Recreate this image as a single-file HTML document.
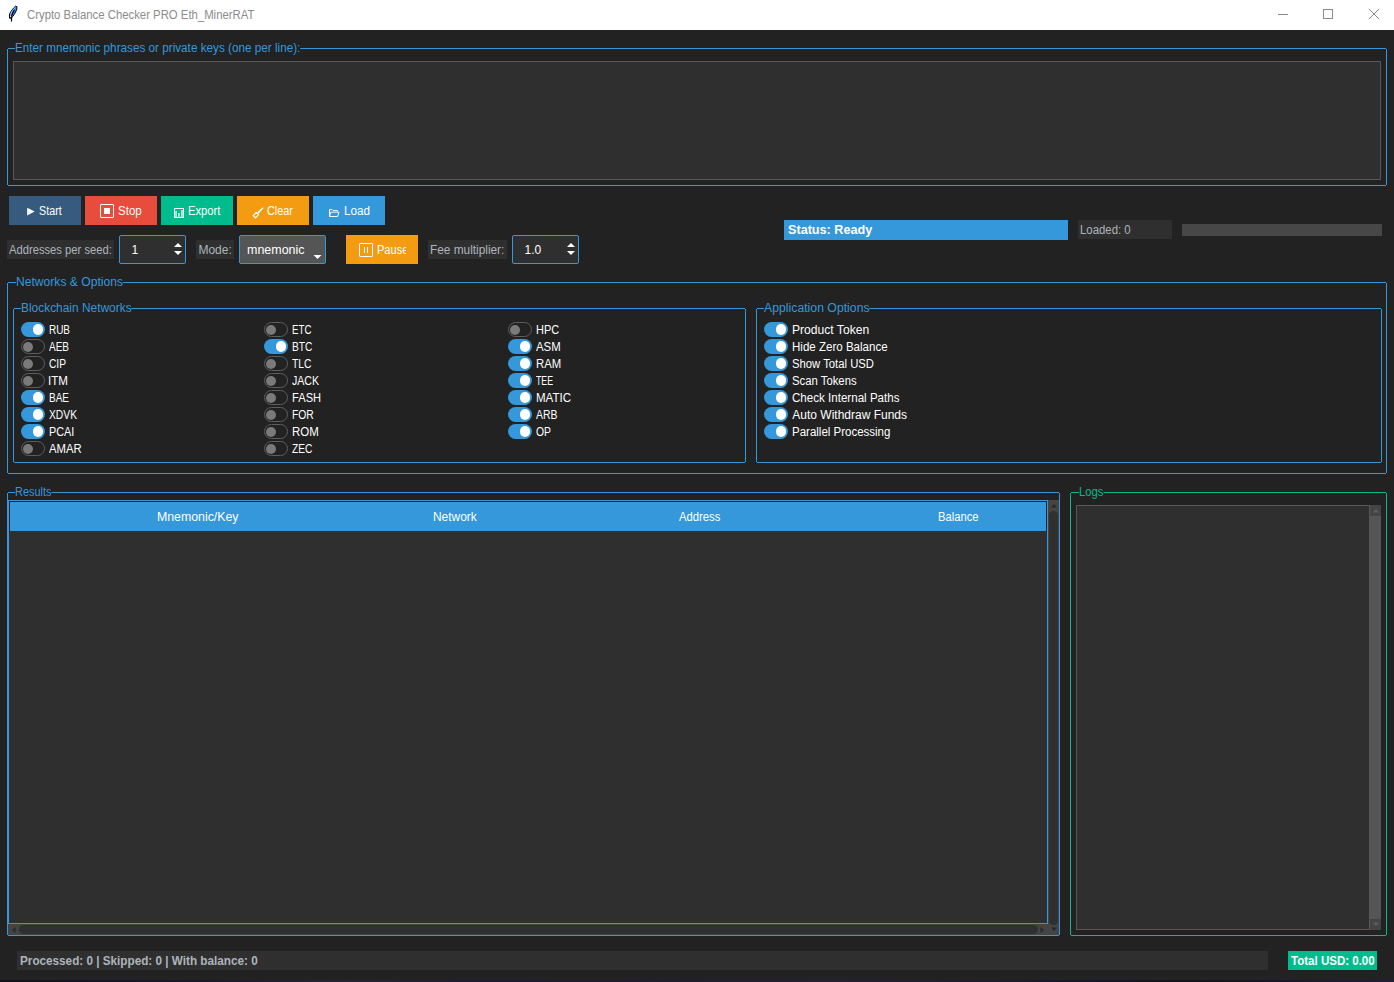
<!DOCTYPE html>
<html><head><meta charset="utf-8"><style>
html,body{margin:0;padding:0;width:1394px;height:982px;overflow:hidden;background:#222;}
.t{position:absolute;white-space:nowrap;transform-origin:0 0;}
</style></head><body>
<div style="position:absolute;left:0px;top:0px;width:1394px;height:30px;background:#fff"></div>
<div style="position:absolute;left:0px;top:30px;width:1394px;height:950px;background:#222"></div>
<div style="position:absolute;left:0px;top:980px;width:1394px;height:2px;background:linear-gradient(90deg,#14121f 0%,#1c1830 15%,#2a2238 25%,#1e1a34 35%,#231c30 50%,#2a1e34 60%,#1a1830 75%,#15131f 85%,#221c3a 100%)"></div>
<svg style="position:absolute;left:0px;top:0px" width="24" height="24" viewBox="0 0 24 24">
<path d="M9.6 18.2 L9.4 15 L10.4 12.4 L12 10 L13.6 8 L15.6 6.2 L16.9 6.6 L16.8 9.2 L15.6 12 L14.1 14.6 L12.6 16.6 L11.2 18.2 Z" fill="#3d8af0" stroke="#000" stroke-width="1"/>
<path d="M10.6 15 L11.6 12 L13.4 9.4 L15.2 7.4" stroke="#8cc0ff" stroke-width="1" fill="none"/>
<path d="M11.5 21.5 L11.5 16.2 L12.6 13.2 L14.4 10" stroke="#000" stroke-width="1.2" fill="none"/>
<rect x="10" y="15.6" width="1.2" height="1.2" fill="#fff"/>
</svg>
<div style="position:absolute;left:1278px;top:14px;width:10px;height:1px;background:#8a8a8a"></div>
<div style="position:absolute;left:1323px;top:9px;width:8px;height:8px;border:1px solid #8a8a8a"></div>
<svg style="position:absolute;left:1368px;top:8px" width="12" height="12" viewBox="0 0 12 12"><path d="M1 1 L11 11 M11 1 L1 11" stroke="#8a8a8a" stroke-width="1"/></svg>
<div style="position:absolute;left:8px;top:48px;width:1378px;height:1px;background:#3498db"></div><div style="position:absolute;left:8px;top:185px;width:1378px;height:1px;background:#3498db"></div><div style="position:absolute;left:7px;top:49px;width:1px;height:136px;background:#3498db"></div><div style="position:absolute;left:1386px;top:49px;width:1px;height:136px;background:#3498db"></div>
<div style="position:absolute;left:13px;top:61px;width:1366px;height:117px;background:#2f2f2f;border:1px solid #575757"></div>
<div style="position:absolute;left:9px;top:196px;width:72px;height:29px;background:#375a7f"></div>
<div style="position:absolute;left:85px;top:196px;width:72px;height:29px;background:#e74c3c"></div>
<div style="position:absolute;left:161px;top:196px;width:72px;height:29px;background:#00bc8c"></div>
<div style="position:absolute;left:237px;top:196px;width:72px;height:29px;background:#f39c12"></div>
<div style="position:absolute;left:313px;top:196px;width:72px;height:29px;background:#3498db"></div>
<svg style="position:absolute;left:26px;top:207px" width="10" height="10" viewBox="0 0 10 10"><path d="M1.2 0.8 L8.6 4.6 L1.2 8.6 Z" fill="#fff"/></svg>
<div style="position:absolute;left:100px;top:204px;width:12px;height:12px;border:1px solid #fff;border-radius:1px"></div>
<div style="position:absolute;left:104px;top:208px;width:6px;height:6px;background:#fff"></div>
<svg style="position:absolute;left:174px;top:208px" width="10" height="10" viewBox="0 0 10 10">
<rect x="0.5" y="0.5" width="9" height="9" fill="none" stroke="#fff" stroke-width="1"/>
<rect x="1.3" y="3" width="1.5" height="7" fill="#fff" opacity="0.85"/><rect x="4.2" y="5" width="1.5" height="5" fill="#fff" opacity="0.85"/><rect x="7.2" y="2" width="1.5" height="8" fill="#fff" opacity="0.85"/></svg>
<svg style="position:absolute;left:252px;top:207px" width="12" height="12" viewBox="0 0 12 12">
<path d="M6.3 5.6 L10.6 1.3" stroke="#fff" stroke-width="1.6" stroke-linecap="round"/>
<path d="M1.2 8.6 L4.3 5.4 L6.6 7.7 L3.5 10.8 Z" fill="none" stroke="#fff" stroke-width="1.2" stroke-linejoin="round"/></svg>
<svg style="position:absolute;left:328px;top:208px" width="12" height="10" viewBox="0 0 12 10">
<path d="M1.5 8.5 V1.5 H4 L5 2.5 H9.5 V3.5" fill="none" stroke="#fff" stroke-width="0.95"/>
<path d="M1.5 8.5 L2.8 4.2 H11 L9.6 8.5 Z" fill="none" stroke="#fff" stroke-width="0.95" stroke-linejoin="round"/></svg>
<div style="position:absolute;left:7px;top:240px;width:107px;height:19px;background:#2f2f2f"></div>
<div style="position:absolute;left:119px;top:235px;width:65px;height:27px;background:#2f2f2f;border:1px solid #3498db;border-radius:2px"></div>
<div style="position:absolute;left:196px;top:240px;width:38px;height:19px;background:#2f2f2f"></div>
<div style="position:absolute;left:239px;top:235px;width:85px;height:27px;background:#555;border:1px solid #3498db;border-radius:2px"></div>
<div style="position:absolute;left:346px;top:235px;width:72px;height:29px;background:#f39c12"></div>
<div style="position:absolute;left:428px;top:240px;width:79px;height:19px;background:#2f2f2f"></div>
<div style="position:absolute;left:512px;top:235px;width:65px;height:27px;background:#2f2f2f;border:1px solid #3498db;border-radius:2px"></div>
<svg style="position:absolute;left:172.5px;top:242px" width="10" height="14" viewBox="0 0 10 14">
<path d="M1 5 L5 1 L9 5 Z" fill="#fff"/><path d="M1 9 L5 13 L9 9 Z" fill="#fff"/></svg>
<svg style="position:absolute;left:565.5px;top:242px" width="10" height="14" viewBox="0 0 10 14">
<path d="M1 5 L5 1 L9 5 Z" fill="#fff"/><path d="M1 9 L5 13 L9 9 Z" fill="#fff"/></svg>
<svg style="position:absolute;left:313px;top:254px" width="9" height="6" viewBox="0 0 9 6"><path d="M0.5 1 L8.5 1 L4.5 5 Z" fill="#fff"/></svg>
<div style="position:absolute;left:359px;top:243px;width:12px;height:12px;border:1px solid #fff;border-radius:1px"></div>
<div style="position:absolute;left:364px;top:247px;width:1px;height:6px;background:#fff"></div>
<div style="position:absolute;left:367px;top:247px;width:1px;height:6px;background:#fff"></div>
<div style="position:absolute;left:784px;top:220px;width:284px;height:20px;background:#3498db"></div>
<div style="position:absolute;left:1078px;top:220px;width:94px;height:19px;background:#2f2f2f"></div>
<div style="position:absolute;left:1182px;top:224px;width:200px;height:12px;background:#474747"></div>
<div style="position:absolute;left:8px;top:282px;width:1378px;height:1px;background:#3498db"></div><div style="position:absolute;left:8px;top:473px;width:1378px;height:1px;background:#3498db"></div><div style="position:absolute;left:7px;top:283px;width:1px;height:190px;background:#3498db"></div><div style="position:absolute;left:1386px;top:283px;width:1px;height:190px;background:#3498db"></div>
<div style="position:absolute;left:14px;top:308px;width:731px;height:1px;background:#3498db"></div><div style="position:absolute;left:14px;top:462px;width:731px;height:1px;background:#3498db"></div><div style="position:absolute;left:13px;top:309px;width:1px;height:153px;background:#3498db"></div><div style="position:absolute;left:745px;top:309px;width:1px;height:153px;background:#3498db"></div>
<div style="position:absolute;left:757px;top:308px;width:624px;height:1px;background:#3498db"></div><div style="position:absolute;left:757px;top:462px;width:624px;height:1px;background:#3498db"></div><div style="position:absolute;left:756px;top:309px;width:1px;height:153px;background:#3498db"></div><div style="position:absolute;left:1381px;top:309px;width:1px;height:153px;background:#3498db"></div>
<div style="position:absolute;left:21px;top:322px;width:24px;height:15px;background:#3498db;border-radius:7.5px"></div>
<div style="position:absolute;left:32.8px;top:324.2px;width:10.6px;height:10.6px;background:#fff;border-radius:50%"></div>
<div style="position:absolute;left:21px;top:339px;width:22px;height:13px;border:1px solid #5e5e5e;border-radius:7.5px"></div>
<div style="position:absolute;left:23px;top:341.5px;width:10px;height:10px;background:#7a7a7a;border-radius:50%"></div>
<div style="position:absolute;left:21px;top:356px;width:22px;height:13px;border:1px solid #5e5e5e;border-radius:7.5px"></div>
<div style="position:absolute;left:23px;top:358.5px;width:10px;height:10px;background:#7a7a7a;border-radius:50%"></div>
<div style="position:absolute;left:21px;top:373px;width:22px;height:13px;border:1px solid #5e5e5e;border-radius:7.5px"></div>
<div style="position:absolute;left:23px;top:375.5px;width:10px;height:10px;background:#7a7a7a;border-radius:50%"></div>
<div style="position:absolute;left:21px;top:390px;width:24px;height:15px;background:#3498db;border-radius:7.5px"></div>
<div style="position:absolute;left:32.8px;top:392.2px;width:10.6px;height:10.6px;background:#fff;border-radius:50%"></div>
<div style="position:absolute;left:21px;top:407px;width:24px;height:15px;background:#3498db;border-radius:7.5px"></div>
<div style="position:absolute;left:32.8px;top:409.2px;width:10.6px;height:10.6px;background:#fff;border-radius:50%"></div>
<div style="position:absolute;left:21px;top:424px;width:24px;height:15px;background:#3498db;border-radius:7.5px"></div>
<div style="position:absolute;left:32.8px;top:426.2px;width:10.6px;height:10.6px;background:#fff;border-radius:50%"></div>
<div style="position:absolute;left:21px;top:441px;width:22px;height:13px;border:1px solid #5e5e5e;border-radius:7.5px"></div>
<div style="position:absolute;left:23px;top:443.5px;width:10px;height:10px;background:#7a7a7a;border-radius:50%"></div>
<div style="position:absolute;left:264px;top:322px;width:22px;height:13px;border:1px solid #5e5e5e;border-radius:7.5px"></div>
<div style="position:absolute;left:266px;top:324.5px;width:10px;height:10px;background:#7a7a7a;border-radius:50%"></div>
<div style="position:absolute;left:264px;top:339px;width:24px;height:15px;background:#3498db;border-radius:7.5px"></div>
<div style="position:absolute;left:275.8px;top:341.2px;width:10.6px;height:10.6px;background:#fff;border-radius:50%"></div>
<div style="position:absolute;left:264px;top:356px;width:22px;height:13px;border:1px solid #5e5e5e;border-radius:7.5px"></div>
<div style="position:absolute;left:266px;top:358.5px;width:10px;height:10px;background:#7a7a7a;border-radius:50%"></div>
<div style="position:absolute;left:264px;top:373px;width:22px;height:13px;border:1px solid #5e5e5e;border-radius:7.5px"></div>
<div style="position:absolute;left:266px;top:375.5px;width:10px;height:10px;background:#7a7a7a;border-radius:50%"></div>
<div style="position:absolute;left:264px;top:390px;width:22px;height:13px;border:1px solid #5e5e5e;border-radius:7.5px"></div>
<div style="position:absolute;left:266px;top:392.5px;width:10px;height:10px;background:#7a7a7a;border-radius:50%"></div>
<div style="position:absolute;left:264px;top:407px;width:22px;height:13px;border:1px solid #5e5e5e;border-radius:7.5px"></div>
<div style="position:absolute;left:266px;top:409.5px;width:10px;height:10px;background:#7a7a7a;border-radius:50%"></div>
<div style="position:absolute;left:264px;top:424px;width:22px;height:13px;border:1px solid #5e5e5e;border-radius:7.5px"></div>
<div style="position:absolute;left:266px;top:426.5px;width:10px;height:10px;background:#7a7a7a;border-radius:50%"></div>
<div style="position:absolute;left:264px;top:441px;width:22px;height:13px;border:1px solid #5e5e5e;border-radius:7.5px"></div>
<div style="position:absolute;left:266px;top:443.5px;width:10px;height:10px;background:#7a7a7a;border-radius:50%"></div>
<div style="position:absolute;left:508px;top:322px;width:22px;height:13px;border:1px solid #5e5e5e;border-radius:7.5px"></div>
<div style="position:absolute;left:510px;top:324.5px;width:10px;height:10px;background:#7a7a7a;border-radius:50%"></div>
<div style="position:absolute;left:508px;top:339px;width:24px;height:15px;background:#3498db;border-radius:7.5px"></div>
<div style="position:absolute;left:519.8px;top:341.2px;width:10.6px;height:10.6px;background:#fff;border-radius:50%"></div>
<div style="position:absolute;left:508px;top:356px;width:24px;height:15px;background:#3498db;border-radius:7.5px"></div>
<div style="position:absolute;left:519.8px;top:358.2px;width:10.6px;height:10.6px;background:#fff;border-radius:50%"></div>
<div style="position:absolute;left:508px;top:373px;width:24px;height:15px;background:#3498db;border-radius:7.5px"></div>
<div style="position:absolute;left:519.8px;top:375.2px;width:10.6px;height:10.6px;background:#fff;border-radius:50%"></div>
<div style="position:absolute;left:508px;top:390px;width:24px;height:15px;background:#3498db;border-radius:7.5px"></div>
<div style="position:absolute;left:519.8px;top:392.2px;width:10.6px;height:10.6px;background:#fff;border-radius:50%"></div>
<div style="position:absolute;left:508px;top:407px;width:24px;height:15px;background:#3498db;border-radius:7.5px"></div>
<div style="position:absolute;left:519.8px;top:409.2px;width:10.6px;height:10.6px;background:#fff;border-radius:50%"></div>
<div style="position:absolute;left:508px;top:424px;width:24px;height:15px;background:#3498db;border-radius:7.5px"></div>
<div style="position:absolute;left:519.8px;top:426.2px;width:10.6px;height:10.6px;background:#fff;border-radius:50%"></div>
<div style="position:absolute;left:764px;top:322px;width:24px;height:15px;background:#3498db;border-radius:7.5px"></div>
<div style="position:absolute;left:775.8px;top:324.2px;width:10.6px;height:10.6px;background:#fff;border-radius:50%"></div>
<div style="position:absolute;left:764px;top:339px;width:24px;height:15px;background:#3498db;border-radius:7.5px"></div>
<div style="position:absolute;left:775.8px;top:341.2px;width:10.6px;height:10.6px;background:#fff;border-radius:50%"></div>
<div style="position:absolute;left:764px;top:356px;width:24px;height:15px;background:#3498db;border-radius:7.5px"></div>
<div style="position:absolute;left:775.8px;top:358.2px;width:10.6px;height:10.6px;background:#fff;border-radius:50%"></div>
<div style="position:absolute;left:764px;top:373px;width:24px;height:15px;background:#3498db;border-radius:7.5px"></div>
<div style="position:absolute;left:775.8px;top:375.2px;width:10.6px;height:10.6px;background:#fff;border-radius:50%"></div>
<div style="position:absolute;left:764px;top:390px;width:24px;height:15px;background:#3498db;border-radius:7.5px"></div>
<div style="position:absolute;left:775.8px;top:392.2px;width:10.6px;height:10.6px;background:#fff;border-radius:50%"></div>
<div style="position:absolute;left:764px;top:407px;width:24px;height:15px;background:#3498db;border-radius:7.5px"></div>
<div style="position:absolute;left:775.8px;top:409.2px;width:10.6px;height:10.6px;background:#fff;border-radius:50%"></div>
<div style="position:absolute;left:764px;top:424px;width:24px;height:15px;background:#3498db;border-radius:7.5px"></div>
<div style="position:absolute;left:775.8px;top:426.2px;width:10.6px;height:10.6px;background:#fff;border-radius:50%"></div>
<div style="position:absolute;left:8px;top:492px;width:1051px;height:1px;background:#3498db"></div><div style="position:absolute;left:8px;top:935px;width:1051px;height:1px;background:#3498db"></div><div style="position:absolute;left:7px;top:493px;width:1px;height:442px;background:#3498db"></div><div style="position:absolute;left:1059px;top:493px;width:1px;height:442px;background:#3498db"></div>
<div style="position:absolute;left:8px;top:500px;width:1038px;height:422px;border:1px solid #3498db;background:#2f2f2f"></div>
<div style="position:absolute;left:9px;top:501px;width:1038px;height:1px;background:#222"></div>
<div style="position:absolute;left:9px;top:501px;width:1px;height:30px;background:#222"></div>
<div style="position:absolute;left:10px;top:502px;width:1036px;height:29px;background:#3498db"></div>
<div style="position:absolute;left:1046px;top:501px;width:1px;height:30px;background:#222"></div>
<div style="position:absolute;left:1048px;top:500px;width:11px;height:435px;background:#444"></div>
<div style="position:absolute;left:1049px;top:511px;width:9px;height:414px;background:#303030;border-radius:5px"></div>
<svg style="position:absolute;left:1050px;top:503px" width="8" height="5" viewBox="0 0 8 5"><path d="M1 4.5 L4 1 L7 4.5 Z" fill="#2a2a2a"/></svg>
<svg style="position:absolute;left:1050px;top:927px" width="8" height="5" viewBox="0 0 8 5"><path d="M1 0.5 L4 4 L7 0.5 Z" fill="#2a2a2a"/></svg>
<div style="position:absolute;left:8px;top:924px;width:1040px;height:11px;background:#444"></div>
<div style="position:absolute;left:19px;top:925px;width:1019px;height:9px;background:#303030;border-radius:5px"></div>
<svg style="position:absolute;left:11px;top:926px" width="5" height="8" viewBox="0 0 5 8"><path d="M4.5 1 L1 4 L4.5 7 Z" fill="#2a2a2a"/></svg>
<svg style="position:absolute;left:1040px;top:926px" width="5" height="8" viewBox="0 0 5 8"><path d="M0.5 1 L4 4 L0.5 7 Z" fill="#2a2a2a"/></svg>
<div style="position:absolute;left:1071px;top:492px;width:315px;height:1px;background:#00bc8c"></div><div style="position:absolute;left:1071px;top:935px;width:315px;height:1px;background:#00bc8c"></div><div style="position:absolute;left:1070px;top:493px;width:1px;height:442px;background:#00bc8c"></div><div style="position:absolute;left:1386px;top:493px;width:1px;height:442px;background:#00bc8c"></div>
<div style="position:absolute;left:1076px;top:505px;width:292px;height:423px;background:#2f2f2f;border:1px solid #575757"></div>
<div style="position:absolute;left:1370px;top:505px;width:11px;height:425px;background:#555"></div>
<div style="position:absolute;left:1370px;top:505px;width:11px;height:11px;background:#444"></div>
<div style="position:absolute;left:1370px;top:919px;width:11px;height:11px;background:#444"></div>
<svg style="position:absolute;left:1372px;top:508px" width="8" height="5" viewBox="0 0 8 5"><path d="M0.5 4.5 L4 1 L7.5 4.5 Z" fill="#5c5c5c"/></svg>
<svg style="position:absolute;left:1372px;top:922px" width="8" height="5" viewBox="0 0 8 5"><path d="M0.5 0.5 L4 4 L7.5 0.5 Z" fill="#5c5c5c"/></svg>
<div style="position:absolute;left:17px;top:951px;width:1251px;height:19px;background:#2f2f2f"></div>
<div style="position:absolute;left:1288px;top:951px;width:89px;height:19px;background:#00bc8c"></div>
<div class="t" style="left:26.60px;top:9px;font:12px 'Liberation Sans';line-height:12px;color:#8c8c8c;transform:scaleX(0.9453);">Crypto Balance Checker PRO Eth_MinerRAT</div>
<div class="t" style="left:15.00px;top:42px;font:12px 'Liberation Sans';line-height:12px;color:#3498db;transform:scaleX(0.9767);background:#222">Enter mnemonic phrases or private keys (one per line):</div>
<div class="t" style="left:39.30px;top:205px;font:12px 'Liberation Sans';line-height:12px;color:#ffffff;transform:scaleX(0.8959);">Start</div>
<div class="t" style="left:117.60px;top:205px;font:12px 'Liberation Sans';line-height:12px;color:#ffffff;transform:scaleX(0.9596);">Stop</div>
<div class="t" style="left:188.20px;top:205px;font:12px 'Liberation Sans';line-height:12px;color:#ffffff;transform:scaleX(0.9336);">Export</div>
<div class="t" style="left:267.40px;top:205px;font:12px 'Liberation Sans';line-height:12px;color:#ffffff;transform:scaleX(0.9066);">Clear</div>
<div class="t" style="left:343.60px;top:205px;font:12px 'Liberation Sans';line-height:12px;color:#ffffff;transform:scaleX(0.9761);">Load</div>
<div class="t" style="left:9.00px;top:244px;font:12px 'Liberation Sans';line-height:12px;color:#adb5bd;transform:scaleX(0.9341);">Addresses per seed:</div>
<div class="t" style="left:131.60px;top:244px;font:12px 'Liberation Sans';line-height:12px;color:#ffffff;">1</div>
<div class="t" style="left:198.40px;top:244px;font:12px 'Liberation Sans';line-height:12px;color:#adb5bd;">Mode:</div>
<div class="t" style="left:246.50px;top:244px;font:12px 'Liberation Sans';line-height:12px;color:#ffffff;transform:scaleX(1.0388);">mnemonic</div>
<div class="t" style="left:430.00px;top:244px;font:12px 'Liberation Sans';line-height:12px;color:#adb5bd;transform:scaleX(0.9864);">Fee multiplier:</div>
<div class="t" style="left:524.60px;top:244px;font:12px 'Liberation Sans';line-height:12px;color:#ffffff;">1.0</div>
<div class="t" style="left:787.70px;top:223px;font:bold 13px 'Liberation Sans';line-height:13px;color:#ffffff;transform:scaleX(0.9719);">Status: Ready</div>
<div class="t" style="left:1080.00px;top:224px;font:12px 'Liberation Sans';line-height:12px;color:#adb5bd;transform:scaleX(0.9495);">Loaded: 0</div>
<div class="t" style="left:15.60px;top:276px;font:12px 'Liberation Sans';line-height:12px;color:#3498db;transform:scaleX(1.0091);background:#222">Networks &amp; Options</div>
<div class="t" style="left:21.00px;top:302px;font:12px 'Liberation Sans';line-height:12px;color:#3498db;transform:scaleX(0.9930);background:#222">Blockchain Networks</div>
<div class="t" style="left:764.40px;top:302px;font:12px 'Liberation Sans';line-height:12px;color:#3498db;transform:scaleX(1.0213);background:#222">Application Options</div>
<div class="t" style="left:15.30px;top:486px;font:12px 'Liberation Sans';line-height:12px;color:#3498db;transform:scaleX(0.9097);background:#222">Results</div>
<div class="t" style="left:1078.60px;top:486px;font:12px 'Liberation Sans';line-height:12px;color:#00bc8c;transform:scaleX(0.9377);background:#222">Logs</div>
<div class="t" style="left:156.50px;top:511px;font:12px 'Liberation Sans';line-height:12px;color:#ffffff;transform:scaleX(1.0269);">Mnemonic/Key</div>
<div class="t" style="left:433.30px;top:511px;font:12px 'Liberation Sans';line-height:12px;color:#ffffff;transform:scaleX(0.9931);">Network</div>
<div class="t" style="left:679.40px;top:511px;font:12px 'Liberation Sans';line-height:12px;color:#ffffff;transform:scaleX(0.9382);">Address</div>
<div class="t" style="left:938.40px;top:511px;font:12px 'Liberation Sans';line-height:12px;color:#ffffff;transform:scaleX(0.9338);">Balance</div>
<div class="t" style="left:19.50px;top:955px;font:bold 12px 'Liberation Sans';line-height:12px;color:#adb5bd;transform:scaleX(0.9767);">Processed: 0 | Skipped: 0 | With balance: 0</div>
<div class="t" style="left:1290.80px;top:955px;font:bold 12px 'Liberation Sans';line-height:12px;color:#ffffff;transform:scaleX(0.9605);">Total USD: 0.00</div>
<div class="t" style="left:49.40px;top:324px;font:12px 'Liberation Sans';line-height:12px;color:#ffffff;transform:scaleX(0.8290);">RUB</div>
<div class="t" style="left:49.40px;top:341px;font:12px 'Liberation Sans';line-height:12px;color:#ffffff;transform:scaleX(0.8331);">AEB</div>
<div class="t" style="left:49.40px;top:358px;font:12px 'Liberation Sans';line-height:12px;color:#ffffff;transform:scaleX(0.8500);">CIP</div>
<div class="t" style="left:48.43px;top:375px;font:12px 'Liberation Sans';line-height:12px;color:#ffffff;transform:scaleX(0.9662);">ITM</div>
<div class="t" style="left:49.40px;top:392px;font:12px 'Liberation Sans';line-height:12px;color:#ffffff;transform:scaleX(0.8331);">BAE</div>
<div class="t" style="left:49.40px;top:409px;font:12px 'Liberation Sans';line-height:12px;color:#ffffff;transform:scaleX(0.8570);">XDVK</div>
<div class="t" style="left:49.40px;top:426px;font:12px 'Liberation Sans';line-height:12px;color:#ffffff;transform:scaleX(0.9034);">PCAI</div>
<div class="t" style="left:49.40px;top:443px;font:12px 'Liberation Sans';line-height:12px;color:#ffffff;transform:scaleX(0.9428);">AMAR</div>
<div class="t" style="left:292.10px;top:324px;font:12px 'Liberation Sans';line-height:12px;color:#ffffff;transform:scaleX(0.8096);">ETC</div>
<div class="t" style="left:292.10px;top:341px;font:12px 'Liberation Sans';line-height:12px;color:#ffffff;transform:scaleX(0.8507);">BTC</div>
<div class="t" style="left:292.10px;top:358px;font:12px 'Liberation Sans';line-height:12px;color:#ffffff;transform:scaleX(0.8564);">TLC</div>
<div class="t" style="left:292.10px;top:375px;font:12px 'Liberation Sans';line-height:12px;color:#ffffff;transform:scaleX(0.8836);">JACK</div>
<div class="t" style="left:292.10px;top:392px;font:12px 'Liberation Sans';line-height:12px;color:#ffffff;transform:scaleX(0.9291);">FASH</div>
<div class="t" style="left:292.10px;top:409px;font:12px 'Liberation Sans';line-height:12px;color:#ffffff;transform:scaleX(0.8611);">FOR</div>
<div class="t" style="left:292.10px;top:426px;font:12px 'Liberation Sans';line-height:12px;color:#ffffff;transform:scaleX(0.9571);">ROM</div>
<div class="t" style="left:292.10px;top:443px;font:12px 'Liberation Sans';line-height:12px;color:#ffffff;transform:scaleX(0.8507);">ZEC</div>
<div class="t" style="left:536.40px;top:324px;font:12px 'Liberation Sans';line-height:12px;color:#ffffff;transform:scaleX(0.9155);">HPC</div>
<div class="t" style="left:536.40px;top:341px;font:12px 'Liberation Sans';line-height:12px;color:#ffffff;transform:scaleX(0.9497);">ASM</div>
<div class="t" style="left:536.40px;top:358px;font:12px 'Liberation Sans';line-height:12px;color:#ffffff;transform:scaleX(0.9449);">RAM</div>
<div class="t" style="left:536.40px;top:375px;font:12px 'Liberation Sans';line-height:12px;color:#ffffff;transform:scaleX(0.7328);">TEE</div>
<div class="t" style="left:536.40px;top:392px;font:12px 'Liberation Sans';line-height:12px;color:#ffffff;transform:scaleX(0.9627);">MATIC</div>
<div class="t" style="left:536.40px;top:409px;font:12px 'Liberation Sans';line-height:12px;color:#ffffff;transform:scaleX(0.8675);">ARB</div>
<div class="t" style="left:536.40px;top:426px;font:12px 'Liberation Sans';line-height:12px;color:#ffffff;transform:scaleX(0.8654);">OP</div>
<div class="t" style="left:792.30px;top:324px;font:12px 'Liberation Sans';line-height:12px;color:#ffffff;transform:scaleX(1.0087);">Product Token</div>
<div class="t" style="left:792.30px;top:341px;font:12px 'Liberation Sans';line-height:12px;color:#ffffff;transform:scaleX(0.9618);">Hide Zero Balance</div>
<div class="t" style="left:792.30px;top:358px;font:12px 'Liberation Sans';line-height:12px;color:#ffffff;transform:scaleX(0.9407);">Show Total USD</div>
<div class="t" style="left:792.30px;top:375px;font:12px 'Liberation Sans';line-height:12px;color:#ffffff;transform:scaleX(0.9431);">Scan Tokens</div>
<div class="t" style="left:792.30px;top:392px;font:12px 'Liberation Sans';line-height:12px;color:#ffffff;transform:scaleX(0.9651);">Check Internal Paths</div>
<div class="t" style="left:792.30px;top:409px;font:12px 'Liberation Sans';line-height:12px;color:#ffffff;">Auto Withdraw Funds</div>
<div class="t" style="left:792.30px;top:426px;font:12px 'Liberation Sans';line-height:12px;color:#ffffff;transform:scaleX(0.9575);">Parallel Processing</div>
<div style="position:absolute;left:346px;top:235px;width:60px;height:29px;overflow:hidden"><div class="t" style="left:31.2px;top:9px;font:12px 'Liberation Sans';line-height:12px;color:#fff;transform:scaleX(0.92)">Pause</div></div>
</body></html>
